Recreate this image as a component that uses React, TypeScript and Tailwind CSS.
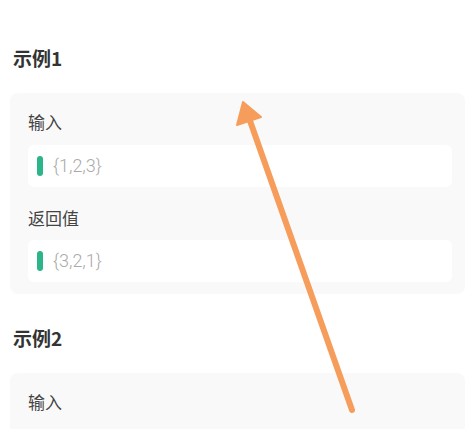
import React from 'react'

const cjk = { fontFamily: '"Noto Sans CJK SC", "Noto Sans", sans-serif' }

function ValueBox({ value }: { value: string }) {
  return (
    <div className="flex items-center h-[42px] bg-white rounded-md pl-[9px]">
      <span className="w-[6px] h-[20px] rounded-full bg-[#2db58a]" />
      <span className="ml-[10px] text-[18px] leading-none text-[#a9a9a9]" style={{ fontFamily: 'Roboto, sans-serif', fontWeight: 300 }}>
        {value}
      </span>
    </div>
  )
}

function Example({ title, input, output }: { title: string; input?: string; output?: string }) {
  return (
    <section>
      <h2 className="ml-[13px] text-[19px] leading-[26px] font-bold text-[#333]">{title}</h2>
      <div
        className={
          input
            ? 'mt-[22px] ml-[10px] w-[455px] bg-[#f9f9f9] rounded-lg pt-[17px] pb-[12px] pl-[18px] pr-[13px]'
            : 'mt-[22px] ml-[10px] w-[455px] min-h-[120px] bg-[#f9f9f9] rounded-lg pt-[17px] pb-[12px] pl-[18px] pr-[13px]'
        }
      >
        <div className="text-[17px] leading-[24px] text-[#444]">输入</div>
        {input && (
          <div className="mt-[11px]">
            <ValueBox value={input} />
          </div>
        )}
        {output && (
          <>
            <div className="mt-[19px] text-[17px] leading-[24px] text-[#444]">返回值</div>
            <div className="mt-[10px]">
              <ValueBox value={output} />
            </div>
          </>
        )}
      </div>
    </section>
  )
}

export default function App() {
  return (
    <main className="relative w-[470px] h-[429px] overflow-hidden bg-white pt-[45px]" style={cjk}>
      <Example title="示例1" input="{1,2,3}" output="{3,2,1}" />
      <div className="mt-[31px]">
        <Example title="示例2" />
      </div>

      {/* annotation arrow */}
      <svg className="absolute left-0 top-0 pointer-events-none" width="470" height="429" viewBox="0 0 470 429">
        <line x1="352" y1="410" x2="249" y2="118" stroke="#f79d5c" strokeWidth="6" strokeLinecap="round" />
        <polygon points="243,102 237,125 261,117" fill="#f79d5c" stroke="#f79d5c" strokeWidth="2" strokeLinejoin="round" />
      </svg>
    </main>
  )
}
